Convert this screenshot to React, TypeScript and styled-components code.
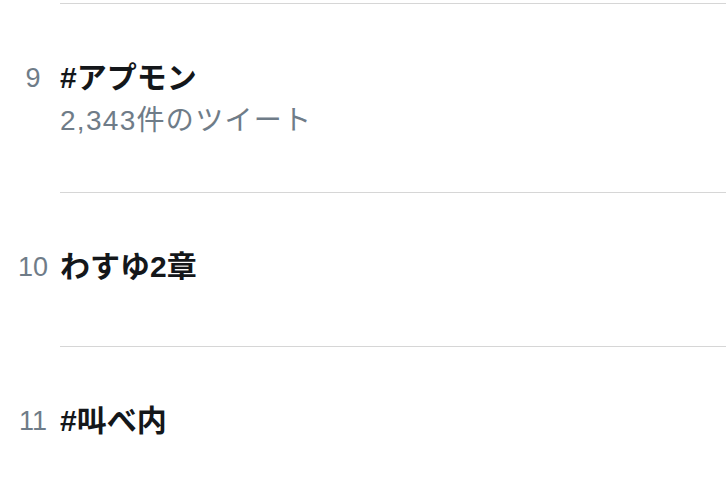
import React from "react";
import styled, { createGlobalStyle } from "styled-components";

const Global = createGlobalStyle`
  html, body { margin: 0; padding: 0; background: #ffffff; }
  body { font-family: "Liberation Sans", "Noto Sans CJK JP", sans-serif; }
`;

const List = styled.div`
  width: 726px;
  height: 499px;
  overflow: hidden;
  background: #fff;
  padding-top: 3px;
  box-sizing: border-box;
`;

const Row = styled.div<{ $tall?: boolean }>`
  display: flex;
  align-items: flex-start;
  border-top: 1px solid #d6d6d6;
  margin-left: 60px;
  height: ${(p) => (p.$tall ? 188 : 153)}px;
  box-sizing: content-box;
`;

const Rank = styled.div`
  width: 60px;
  margin-left: -60px;
  padding-top: 56px;
  padding-left: 6px;
  box-sizing: border-box;
  text-align: center;
  font-family: "Liberation Sans", Arial, sans-serif;
  font-size: 27px;
  line-height: 36px;
  color: #6f7c88;
  flex: none;
`;

const Body = styled.div`
  display: flex;
  flex-direction: column;
  padding-top: 56px;
`;

const Title = styled.div`
  font-family: "Liberation Sans", "Noto Sans CJK JP", sans-serif;
  font-weight: 700;
  font-size: 30px;
  line-height: 36px;
  color: #14171a;
`;

const Sub = styled.div`
  font-family: "Liberation Sans", "Noto Sans CJK JP", sans-serif;
  font-size: 28px;
  letter-spacing: 1.3px;
  line-height: 34px;
  margin-top: 8px;
  color: #6f7c88;
`;

const trends = [
  { rank: 9, name: "#アプモン", count: "2,343件のツイート" },
  { rank: 10, name: "わすゆ2章" },
  { rank: 11, name: "#叫べ内" },
];

export default function App() {
  return (
    <List>
      <Global />
      {trends.map((t) => (
        <Row key={t.rank} $tall={!!t.count}>
          <Rank>{t.rank}</Rank>
          <Body>
            <Title>{t.name}</Title>
            {t.count && <Sub>{t.count}</Sub>}
          </Body>
        </Row>
      ))}
    </List>
  );
}
